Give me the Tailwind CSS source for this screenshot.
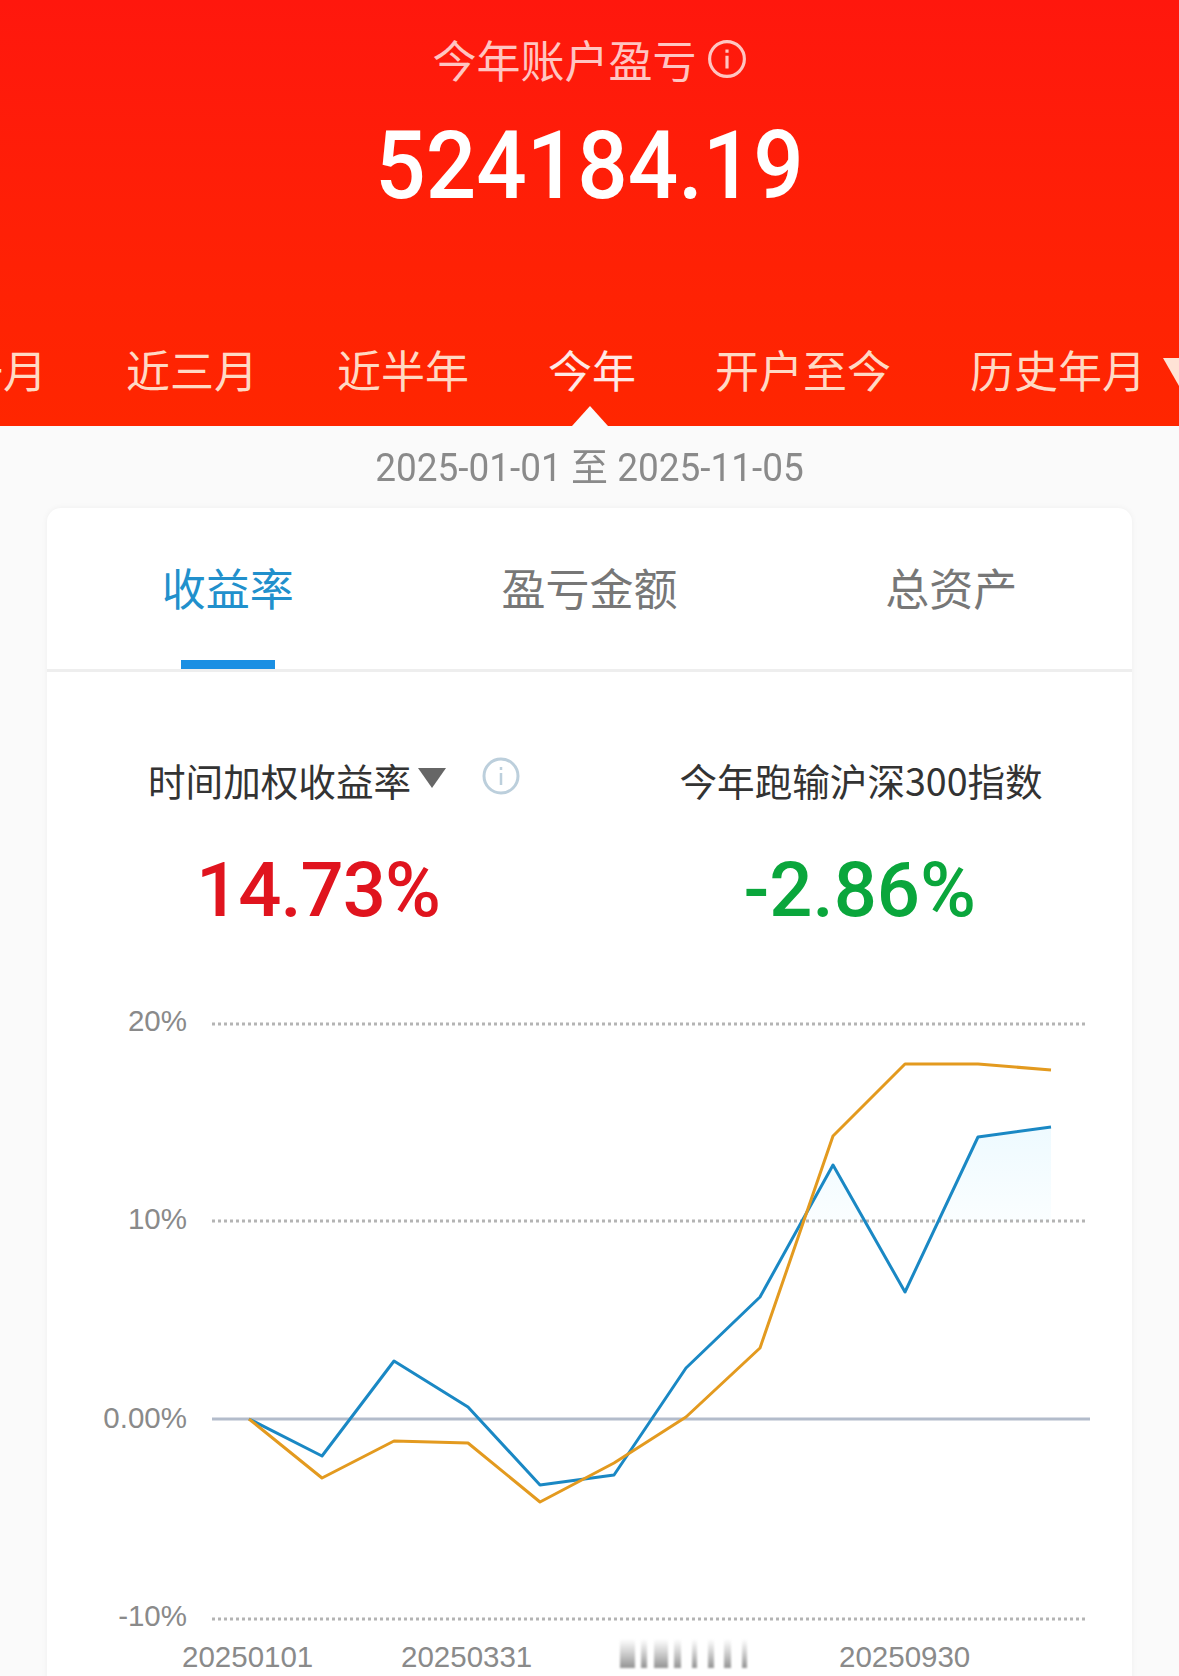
<!DOCTYPE html>
<html lang="zh-CN">
<head>
  <meta charset="UTF-8" />
  <title>今年账户盈亏</title>
  <script src="https://cdn.jsdelivr.net/npm/@tailwindcss/browser@4"></script>
</head>
<body class="bg-[#fafafa] w-[1179px] h-[1676px] overflow-hidden font-['Noto_Sans_CJK_SC','Noto_Sans',sans-serif]">

  <!-- Red header -->
  <header class="relative h-[426px] overflow-hidden bg-gradient-to-b from-[#ff170d] to-[#ff2600] text-white">
    <div class="flex items-center justify-center gap-[10px] pt-[26px] h-[92px] text-[44px] leading-none text-white/75">
      <span>今年账户盈亏</span>
      <svg class="w-[40px] h-[40px]" viewBox="0 0 38 38" fill="none" stroke="currentColor">
        <circle cx="19" cy="19" r="16.5" stroke-width="3" />
        <path d="M19 16v12M19 10v3" stroke-width="3" />
      </svg>
    </div>
    <div class="mt-[14px] h-[120px] flex items-center justify-center font-['Roboto',sans-serif] font-medium text-[94px] leading-none scale-x-[0.945]">524184.19</div>

    <!-- Period tabs -->
    <nav class="mt-[113px] ml-[-85px] flex items-center gap-[79px] h-[60px] text-[44px] leading-none text-[#ffd9c4] whitespace-nowrap">
      <span>近一月</span>
      <span>近三月</span>
      <span>近半年</span>
      <span class="text-white/90">今年</span>
      <span>开户至今</span>
      <span>历史年月</span>
    </nav>
    <svg class="absolute left-[1163px] top-[358px] w-[32px] h-[28px]" viewBox="0 0 32 28"><path d="M0 0h32L16 28z" fill="#ffe3d6" /></svg>
    <svg class="absolute left-[572px] top-[406px] w-[36px] h-[20px]" viewBox="0 0 36 20"><path d="M18 0l18 20H0z" fill="#fafafa" /></svg>
  </header>

  <div class="h-[82px] pt-[21px] text-center font-['Roboto','Noto_Sans_CJK_SC',sans-serif] text-[39px] leading-[42px] text-[#8a8a8a] scale-x-[0.948]">2025-01-01 至 2025-11-05</div>

  <!-- Card -->
  <main class="mx-[47px] h-[1200px] rounded-t-[14px] bg-white shadow-[0_0_6px_rgba(0,0,0,0.05)]">
    <div class="grid grid-cols-3 h-[164px] border-b-[3px] border-[#eeeeee] text-[44px] text-center text-[#777777]">
      <div class="relative pt-[50px] leading-[58px] text-[#2190cc]">
        收益率
        <span class="absolute left-[134px] bottom-0 w-[94px] h-[9px] bg-[#1a8fe3]"></span>
      </div>
      <div class="pt-[50px] leading-[58px]">盈亏金额</div>
      <div class="pt-[50px] leading-[58px]">总资产</div>
    </div>

    <div class="grid grid-cols-2 pt-[84px]">
      <div class="pl-[101px]">
        <div class="relative h-[48px] text-[37.6px] leading-[48px] text-[#333333]">
          时间加权收益率
          <svg class="absolute left-[270px] top-[12px] w-[28px] h-[20px]" viewBox="0 0 28 20"><path d="M0 0h28L14 20z" fill="#666666" /></svg>
          <svg class="absolute left-[333px] top-[0px] w-[40px] h-[40px]" viewBox="0 0 40 40" fill="none">
            <circle cx="20" cy="20" r="17" stroke="#bccfdc" stroke-width="3" />
            <path d="M20 17v12M20 11v3" stroke="#bccfdc" stroke-width="2.5" />
          </svg>
        </div>
        <div class="mt-[46px] ml-[48px] font-['Roboto',sans-serif] font-medium text-[76px] leading-[80px] tracking-[-1px] text-[#e0141e]">14.73%</div>
      </div>
      <div class="pl-[90px]">
        <div class="h-[48px] text-[37.6px] leading-[48px] text-[#333333]">今年跑输沪深300指数</div>
        <div class="mt-[46px] ml-[64px] font-['Roboto',sans-serif] font-medium text-[76px] leading-[80px] text-[#0aa63c]">-2.86%</div>
      </div>
    </div>

    <!-- Chart, viewBox uses page coordinates -->
    <svg class="block w-[1085px] h-[716px] mt-[31px]" viewBox="47 960 1085 716" font-family="'Liberation Sans', sans-serif" font-size="29.5" fill="#8a8a8a">
      <defs>
        <linearGradient id="areaFill" gradientUnits="userSpaceOnUse" x1="0" y1="1127" x2="0" y2="1225">
          <stop offset="0" stop-color="#eefaff" />
          <stop offset="1" stop-color="#fbfeff" />
        </linearGradient>
        <linearGradient id="fadeBar" x1="0" y1="0" x2="0" y2="1">
          <stop offset="0" stop-color="#8a8a8a" stop-opacity="0" />
          <stop offset="1" stop-color="#777777" stop-opacity="0.8" />
        </linearGradient>
      </defs>

      <path d="M938 1220L978 1136L1051 1126V1220Z" fill="url(#areaFill)" />
      <path d="M802 1220L833 1164L865 1220Z" fill="url(#areaFill)" />

      <g stroke="#b4b4b4" stroke-width="3" stroke-dasharray="3 3">
        <path d="M212 1023H1086" />
        <path d="M212 1220H1086" />
        <path d="M212 1618H1086" />
      </g>
      <path d="M212 1418H1090" stroke="#b3bccb" stroke-width="3" />

      <polyline fill="none" stroke="#1a88c4" stroke-width="3" stroke-linejoin="round" points="249,1418 322,1455 394,1360 468,1406 540,1484 614,1474 686,1367 760,1296 833,1164 905,1291 978,1136 1051,1126" />
      <polyline fill="none" stroke="#e39a1f" stroke-width="3" stroke-linejoin="round" points="249,1418 322,1477 394,1440 468,1442 540,1501 614,1462 686,1416 760,1347 833,1135 905,1063 978,1063 1051,1069" />

      <g text-anchor="end">
        <text x="187" y="1030">20%</text>
        <text x="187" y="1228">10%</text>
        <text x="187" y="1427">0.00%</text>
        <text x="187" y="1625">-10%</text>
      </g>
      <text x="182" y="1666">20250101</text>
      <text x="401" y="1666">20250331</text>
      <text x="839" y="1666">20250930</text>

      <g fill="url(#fadeBar)" class="blur-[1px]">
        <rect x="620" y="1638" width="15" height="29" />
        <rect x="641" y="1638" width="6" height="29" />
        <rect x="654" y="1638" width="14" height="29" />
        <rect x="674" y="1638" width="7" height="29" />
        <rect x="692" y="1638" width="5" height="29" />
        <rect x="708" y="1638" width="6" height="29" />
        <rect x="724" y="1638" width="7" height="29" />
        <rect x="742" y="1638" width="5" height="29" />
      </g>
    </svg>
  </main>
</body>
</html>
